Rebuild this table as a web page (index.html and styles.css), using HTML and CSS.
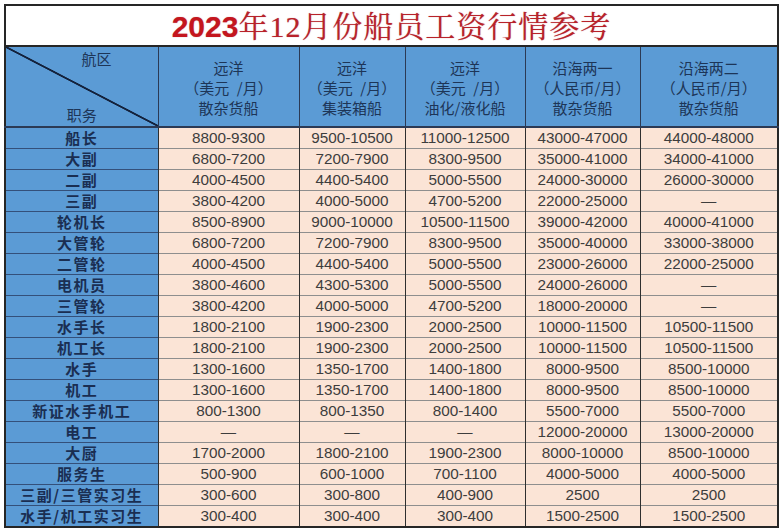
FILE: index.html
```html
<!DOCTYPE html>
<html lang="zh-CN">
<head>
<meta charset="utf-8">
<title>2023年12月份船员工资行情参考</title>
<link rel="stylesheet" href="styles.css">
</head>
<body>
<div class="sheet">
<table class="wage">
<colgroup>
<col class="c1"><col class="c2"><col class="c3"><col class="c4"><col class="c5"><col class="c6">
</colgroup>
<tr class="title-row">
<th colspan="6" class="title"><span class="yr">2023</span><span class="zh">年<span class="num">12</span>月份船员工资行情参考</span></th>
</tr>
<tr class="head">
<th class="diag"><span class="area">航区</span><span class="post">职务</span></th>
<th>远洋<br>（美元&ensp;/月）<br>散杂货船</th>
<th>远洋<br>（美元&ensp;/月）<br>集装箱船</th>
<th>远洋<br>（美元&ensp;/月）<br>油化/液化船</th>
<th>沿海两一<br>（人民币/月）<br>散杂货船</th>
<th>沿海两二<br>（人民币/月）<br>散杂货船</th>
</tr>
<tr><th class="job">船长</th><td>8800-9300</td><td>9500-10500</td><td>11000-12500</td><td>43000-47000</td><td>44000-48000</td></tr>
<tr><th class="job">大副</th><td>6800-7200</td><td>7200-7900</td><td>8300-9500</td><td>35000-41000</td><td>34000-41000</td></tr>
<tr><th class="job">二副</th><td>4000-4500</td><td>4400-5400</td><td>5000-5500</td><td>24000-30000</td><td>26000-30000</td></tr>
<tr><th class="job">三副</th><td>3800-4200</td><td>4000-5000</td><td>4700-5200</td><td>22000-25000</td><td>—</td></tr>
<tr><th class="job">轮机长</th><td>8500-8900</td><td>9000-10000</td><td>10500-11500</td><td>39000-42000</td><td>40000-41000</td></tr>
<tr><th class="job">大管轮</th><td>6800-7200</td><td>7200-7900</td><td>8300-9500</td><td>35000-40000</td><td>33000-38000</td></tr>
<tr><th class="job">二管轮</th><td>4000-4500</td><td>4400-5400</td><td>5000-5500</td><td>23000-26000</td><td>22000-25000</td></tr>
<tr><th class="job">电机员</th><td>3800-4600</td><td>4300-5300</td><td>5000-5500</td><td>24000-26000</td><td>—</td></tr>
<tr><th class="job">三管轮</th><td>3800-4200</td><td>4000-5000</td><td>4700-5200</td><td>18000-20000</td><td>—</td></tr>
<tr><th class="job">水手长</th><td>1800-2100</td><td>1900-2300</td><td>2000-2500</td><td>10000-11500</td><td>10500-11500</td></tr>
<tr><th class="job">机工长</th><td>1800-2100</td><td>1900-2300</td><td>2000-2500</td><td>10000-11500</td><td>10500-11500</td></tr>
<tr><th class="job">水手</th><td>1300-1600</td><td>1350-1700</td><td>1400-1800</td><td>8000-9500</td><td>8500-10000</td></tr>
<tr><th class="job">机工</th><td>1300-1600</td><td>1350-1700</td><td>1400-1800</td><td>8000-9500</td><td>8500-10000</td></tr>
<tr><th class="job">新证水手机工</th><td>800-1300</td><td>800-1350</td><td>800-1400</td><td>5500-7000</td><td>5500-7000</td></tr>
<tr><th class="job">电工</th><td>—</td><td>—</td><td>—</td><td>12000-20000</td><td>13000-20000</td></tr>
<tr><th class="job">大厨</th><td>1700-2000</td><td>1800-2100</td><td>1900-2300</td><td>8000-10000</td><td>8500-10000</td></tr>
<tr><th class="job">服务生</th><td>500-900</td><td>600-1000</td><td>700-1100</td><td>4000-5000</td><td>4000-5000</td></tr>
<tr><th class="job">三副/三管实习生</th><td>300-600</td><td>300-800</td><td>400-900</td><td>2500</td><td>2500</td></tr>
<tr><th class="job">水手/机工实习生</th><td>300-400</td><td>300-400</td><td>300-400</td><td>1500-2500</td><td>1500-2500</td></tr>
</table>
</div>
</body>
</html>
```

FILE: styles.css
```css
html, body {
  margin: 0;
  padding: 0;
  background: #ffffff;
}

.sheet {
  padding: 4px 0 0 4px;
}

.wage {
  border-collapse: collapse;
  table-layout: fixed;
  width: 773px;
  border: 2px solid #262626;
  font-family: "Liberation Sans", "Noto Sans CJK SC", sans-serif;
}

.c1 { width: 153px; }
.c2 { width: 141px; }
.c3 { width: 106px; }
.c4 { width: 120px; }
.c5 { width: 115px; }
.c6 { width: 138px; }

.wage th,
.wage td {
  padding: 0;
  text-align: center;
  vertical-align: middle;
  white-space: nowrap;
}

.title-row th {
  height: 37px;
  background: #ffffff;
  border-bottom: 2px solid #262626;
}

.title {
  font-size: 30px;
  line-height: 36px;
  color: #b8222a;
  text-shadow: 0 0 1px rgba(150, 20, 25, 0.5);
}

.yr {
  font-family: "Liberation Sans", sans-serif;
  font-weight: 700;
  color: #c4161e;
}

.zh {
  font-family: "Noto Serif CJK SC", "Noto Sans CJK SC", serif;
  font-weight: 400;
  letter-spacing: 1px;
}

.num {
  font-family: "Liberation Serif", serif;
}

.head th {
  height: 77px;
  background: #5b9bd5;
  color: #1d3557;
  font-family: "Noto Sans CJK SC", sans-serif;
  font-weight: 400;
  font-size: 15px;
  line-height: 20px;
  border-left: 1px solid #2b3a55;
  border-bottom: 2px solid #2b3a55;
  padding-top: 2px;
}

.head th.diag {
  border-left: none;
  padding: 0;
  height: 79px;
  background:
    linear-gradient(to top right, transparent calc(50% - 1.3px), #14223c calc(50% - 0.6px), #14223c calc(50% + 0.6px), transparent calc(50% + 1.3px)),
    #5b9bd5;
}

.diag .area,
.diag .post {
  display: block;
  font-size: 15px;
  line-height: 20px;
}

.diag .area {
  text-align: right;
  padding-right: 46px;
  margin-bottom: 36px;
}

.diag .post {
  text-align: center;
}

.wage td {
  height: 20px;
  background: #fbe4d6;
  color: #3d3d3d;
  font-size: 15.3px;
  line-height: 20px;
  border-left: 1px solid #2f2f2f;
  border-top: 1px solid #8e8e8e;
  overflow: hidden;
}

.wage th.job {
  height: 20px;
  background: #5b9bd5;
  color: #1a2e52;
  font-family: "Noto Sans CJK SC", sans-serif;
  font-weight: 700;
  font-size: 15px;
  line-height: 20px;
  letter-spacing: 1.5px;
  border-top: 1px solid #34507a;
  border-right: 1px solid #2f2f2f;
  overflow: hidden;
}
```
